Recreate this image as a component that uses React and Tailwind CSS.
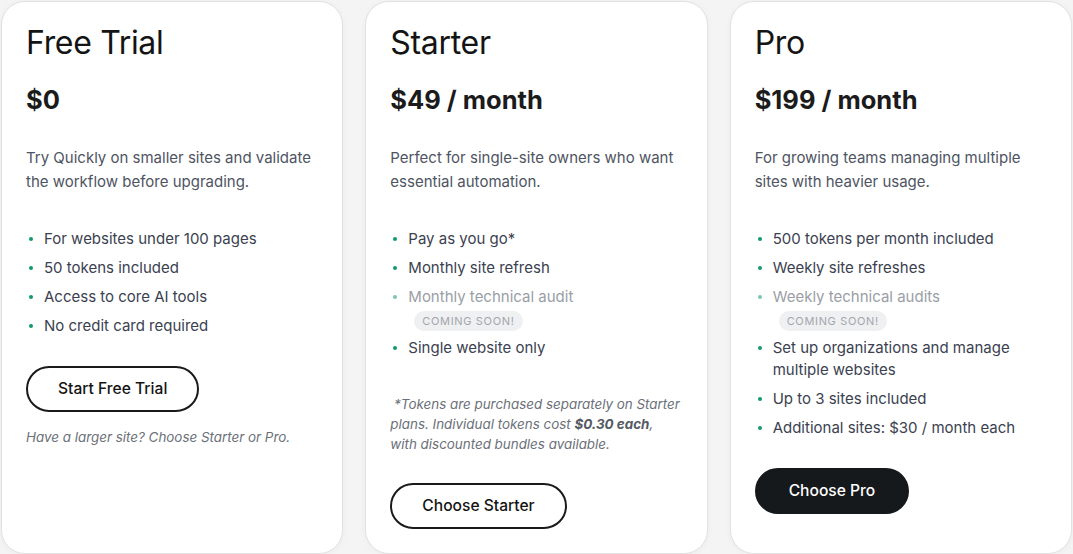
import React from 'react';

const plans = [
  {
    name: 'Free Trial',
    price: '$0',
    desc: ['Try Quickly on smaller sites and validate', 'the workflow before upgrading.'],
    features: [
      { text: 'For websites under 100 pages' },
      { text: '50 tokens included' },
      { text: 'Access to core AI tools' },
      { text: 'No credit card required' },
    ],
    cta: 'Start Free Trial',
    after: 'Have a larger site? Choose Starter or Pro.',
  },
  {
    name: 'Starter',
    price: '$49 / month',
    desc: ['Perfect for single-site owners who want', 'essential automation.'],
    features: [
      { text: 'Pay as you go*' },
      { text: 'Monthly site refresh' },
      { text: 'Monthly technical audit', soon: true },
      { text: 'Single website only' },
    ],
    note: true,
    cta: 'Choose Starter',
  },
  {
    name: 'Pro',
    price: '$199 / month',
    desc: ['For growing teams managing multiple', 'sites with heavier usage.'],
    features: [
      { text: '500 tokens per month included' },
      { text: 'Weekly site refreshes' },
      { text: 'Weekly technical audits', soon: true },
      { text: 'Set up organizations and manage multiple websites' },
      { text: 'Up to 3 sites included' },
      { text: 'Additional sites: $30 / month each' },
    ],
    cta: 'Choose Pro',
    dark: true,
  },
];

const Feature = ({ text, soon }) => (
  <li className="flex flex-col">
    <div className="flex items-start">
      <span
        className={`mt-[9px] ml-[3px] mr-[11px] h-[4px] w-[4px] shrink-0 rounded-full ${
          soon ? 'bg-[#7cc7ab]' : 'bg-[#109a70]'
        }`}
      />
      <span className={soon ? 'text-[#9a9ea6]' : 'text-[#3b4150]'}>{text}</span>
    </div>
    {soon && (
      <span className="mt-[3px] ml-[24px] mb-[-1px] inline-flex h-5 w-fit items-center rounded-full bg-[#eff0f2] px-2 text-[11px] uppercase tracking-[0.06em] text-[#a3a6ab]">
        Coming soon!
      </span>
    )}
  </li>
);

const Card = ({ plan }) => (
  <div className="flex flex-col rounded-[24px] border border-[#e2e2e2] bg-white px-6 pt-[25px] pb-6 shadow-[0_1px_6px_rgba(0,0,0,0.04)]">
    <h2 className="text-[32px] font-normal leading-none tracking-[-0.01em] text-[#141414]">{plan.name}</h2>
    <div className="mt-[25px] text-[25.5px] font-bold leading-8 text-[#1b1b1b]">{plan.price}</div>
    <p className="mt-[30px] text-[15px] leading-6 text-[#4e5462]">
      {plan.desc.map((l) => (
        <span key={l} className="block whitespace-nowrap">{l}</span>
      ))}
    </p>
    <ul className="mt-[34px] flex flex-col gap-[7px] text-[15px] leading-[22px]">
      {plan.features.map((f) => (
        <Feature key={f.text} {...f} />
      ))}
    </ul>
    {plan.note && (
      <p className="mt-[35px] text-[13.4px] italic leading-5 text-[#6b7079]">
        <span className="block whitespace-nowrap">&nbsp;*Tokens are purchased separately on Starter</span>
        <span className="block whitespace-nowrap">
          plans. Individual tokens cost <b className="font-bold text-[#555a63]">$0.30 each</b>,
        </span>
        <span className="block whitespace-nowrap">with discounted bundles available.</span>
      </p>
    )}
    <div className="mt-[29px]">
      <button
        className={`h-[46px] rounded-full border-2 text-[15.6px] font-medium ${
          plan.dark
            ? 'border-[#16191c] bg-[#16191c] px-[32px] text-white'
            : 'border-[#1a1a1a] bg-white px-[30px] text-[#141414]'
        }`}
      >
        {plan.cta}
      </button>
    </div>
    {plan.after && (
      <p className="mt-[15px] text-[13.4px] italic leading-5 text-[#6b7079]">{plan.after}</p>
    )}
  </div>
);

export default function App() {
  return (
    <div
      className="min-h-screen bg-[#f4f4f4] px-px pt-px"
      style={{ fontFamily: 'Inter, "Noto Sans", sans-serif' }}
    >
      <div className="grid h-[552px] grid-cols-3 gap-[22px]">
        {plans.map((p) => (
          <Card key={p.name} plan={p} />
        ))}
      </div>
    </div>
  );
}
